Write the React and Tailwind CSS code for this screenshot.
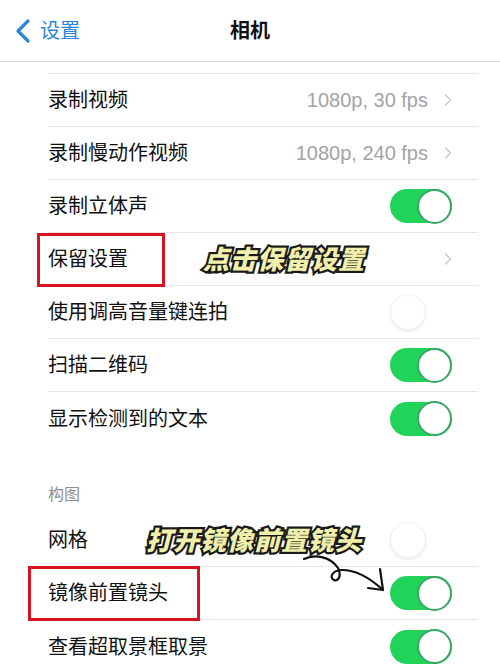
import { ChevronRight } from 'lucide-react';

const font = { fontFamily: '"Liberation Sans", "Noto Sans CJK SC", sans-serif' };

function Toggle({ on }) {
    if (on) {
        return (
            <div className="w-[62px] h-[34px] rounded-full bg-[#22d35a] flex items-center justify-end">
                <div className="w-[35px] h-[35px] rounded-full bg-white border-2 border-[#3aa865]" />
            </div>
        );
    }
    return (
        <div className="w-[62px] h-[34px] rounded-full bg-white flex items-center">
            <div className="w-[36px] h-[36px] rounded-full bg-white border border-[#efefef] shadow-[0_2px_3px_rgba(0,0,0,0.07)]" />
        </div>
    );
}

function Row({ label, value, chevron, toggle, last }) {
    return (
        <div className={`ml-12 mr-[22px] h-[53px] flex items-center justify-between pr-[26px] ${last ? '' : 'border-b border-[#e6e6e8]'}`}>
            <span className="text-[20px] text-[#111]">{label}</span>
            <div className="flex items-center gap-[10px]">
                {value && <span className="text-[20px] text-[#a3a3a8]">{value}</span>}
                {chevron && <ChevronRight size={20} strokeWidth={1.6} className="text-[#c7c7cc] -mr-[6px]" />}
                {toggle !== undefined && <Toggle on={toggle} />}
            </div>
        </div>
    );
}

function Callout({ children, className }) {
    return (
        <span
            className={`absolute italic font-black text-[26px] leading-none text-[#f1efac] [paint-order:stroke_fill] [-webkit-text-stroke:4.5px_#1a1a1a] tracking-[1px] ${className}`}
            style={{ fontFamily: '"Noto Sans CJK SC", sans-serif' }}
        >
            {children}
        </span>
    );
}

export default function App() {
    return (
        <div className="relative w-[500px] h-[664px] overflow-hidden bg-white" style={font}>
            {/* Nav bar */}
            <div className="h-[62px] border-b border-[#dcdcdc] flex items-center relative">
                <div className="flex items-center pl-[14px] gap-[8px] text-[#2b85d8]">
                    <svg width="18" height="26" viewBox="0 0 18 26">
                        <path d="M14 3 L4 13 L14 23" fill="none" stroke="currentColor" strokeWidth="3.2" strokeLinecap="round" strokeLinejoin="round" />
                    </svg>
                    <span className="text-[20px]">设置</span>
                </div>
                <span className="absolute left-1/2 -translate-x-1/2 text-[20px] font-bold text-[#111]">相机</span>
            </div>

            {/* Video group (scrolled) */}
            <div className="h-[11px]" />
            <div className="ml-12 mr-[22px] border-b border-[#e6e6e8]" />
            <Row label="录制视频" value="1080p, 30 fps" chevron />
            <Row label="录制慢动作视频" value="1080p, 240 fps" chevron />
            <Row label="录制立体声" toggle={true} />
            <Row label="保留设置" chevron />
            <Row label="使用调高音量键连拍" toggle={false} />
            <Row label="扫描二维码" toggle={true} />
            <Row label="显示检测到的文本" toggle={true} last />

            {/* Composition group */}
            <div className="pl-12 pt-[38px] pb-[8px] text-[16px] text-[#8e8e93] leading-[23px]">构图</div>
            <Row label="网格" toggle={false} />
            <Row label="镜像前置镜头" toggle={true} />
            <Row label="查看超取景框取景" toggle={true} last />

            {/* Annotations */}
            <div className="absolute left-[37px] top-[233px] w-[128px] h-[54px] border-[3px] border-[#d8121f]" />
            <div className="absolute left-[28px] top-[566px] w-[172px] h-[55px] border-[3px] border-[#d8121f]" />
            <Callout className="left-[203px] top-[245px]">点击保留设置</Callout>
            <Callout className="left-[146px] top-[526px]">打开镜像前置镜头</Callout>
            <svg className="absolute left-[300px] top-[552px]" width="90" height="45" viewBox="0 0 90 45">
                <path d="M4 7 C 14 2, 30 4, 38 16 C 42 24, 38 30, 34 28 C 29 26, 32 18, 42 18 C 55 18, 70 26, 83 38" fill="none" stroke="#111" strokeWidth="2.2" strokeLinecap="round" />
                <path d="M68 36 L83 38 L80 17" fill="none" stroke="#111" strokeWidth="2.2" strokeLinecap="round" strokeLinejoin="round" />
            </svg>
        </div>
    );
}
